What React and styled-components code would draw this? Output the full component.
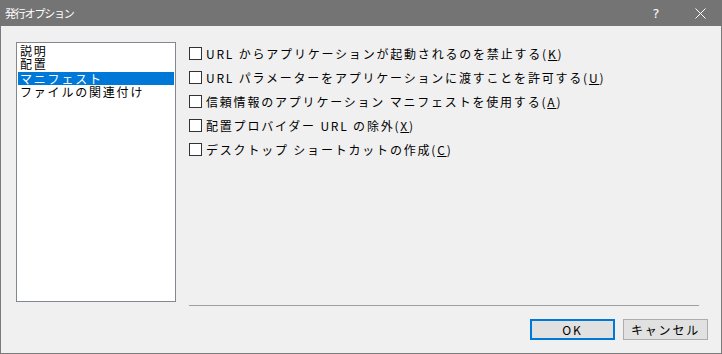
import React from 'react';
import styled, { createGlobalStyle } from 'styled-components';

const GlobalStyle = createGlobalStyle`
  html, body {
    margin: 0;
    padding: 0;
    background: #f0f0f0;
  }
  body {
    font-family: "Noto Sans CJK JP", "DejaVu Sans", sans-serif;
    -webkit-font-smoothing: none;
  }
`;

const Window = styled.div`
  width: 722px;
  height: 354px;
  box-sizing: border-box;
  display: flex;
  flex-direction: column;
  background: #f0f0f0;
  border: 1px solid #7a7a7a;
  border-top: none;
`;

const TitleBar = styled.div`
  height: 26px;
  margin: 0 -1px;
  background: #747474;
  color: #ffffff;
  display: flex;
  align-items: center;
  padding-left: 5px;
  font-size: 11px;
  letter-spacing: -1.2px;
`;

const TitleText = styled.span`
  flex: 1;
`;

const TitleButton = styled.span`
  width: 44px;
  height: 26px;
  display: flex;
  align-items: center;
  justify-content: center;
  font-family: "DejaVu Sans", sans-serif;
  font-size: 13px;
  letter-spacing: 0;
`;

const Body = styled.div`
  flex: 1;
  display: flex;
  flex-direction: column;
  padding: 16px 13px 13px 15px;
`;

const TopRow = styled.div`
  display: flex;
  align-items: flex-start;
`;

const ListBox = styled.ul`
  list-style: none;
  margin: 0;
  padding: 1px 1px;
  width: 160px;
  height: 260px;
  box-sizing: border-box;
  background: #ffffff;
  border: 1px solid #828790;
`;

const ListItem = styled.li`
  height: 13px;
  line-height: 13px;
  padding-left: 2px;
  font-size: 12px;
  letter-spacing: 1.8px;
  white-space: nowrap;
  color: ${({ selected }) => (selected ? '#ffffff' : '#000000')};
  background: ${({ selected }) => (selected ? '#0078d7' : 'transparent')};
  margin-top: ${({ selected }) => (selected ? '2px' : '0')};
`;

const OptionsPane = styled.div`
  flex: 1;
  height: 264px;
  margin-left: 13px;
  padding-right: 9px;
  display: flex;
  flex-direction: column;
`;

const OptionRow = styled.label`
  height: 24px;
  padding-bottom: 2px;
  box-sizing: border-box;
  display: flex;
  align-items: center;
  font-size: 12px;
  letter-spacing: 1.8px;
  color: #000000;
  white-space: nowrap;
`;

const CheckBox = styled.span`
  width: 13px;
  height: 13px;
  box-sizing: border-box;
  border: 1px solid #333333;
  background: #ffffff;
  margin-right: 4px;
  flex-shrink: 0;
`;

const Mnemonic = styled.span`
  text-decoration: underline;
`;

const Spacer = styled.div`
  flex: 1;
`;

const Separator = styled.div`
  height: 1px;
  background: #a0a0a0;
`;

const ButtonRow = styled.div`
  margin-top: 13px;
  display: flex;
  justify-content: flex-end;
  gap: 8px;
`;

const Button = styled.button`
  width: 85px;
  height: 21px;
  box-sizing: border-box;
  background: #e1e1e1;
  border: ${({ primary }) => (primary ? '2px solid #0078d7' : '1px solid #adadad')};
  font-family: "Noto Sans CJK JP", "DejaVu Sans", sans-serif;
  font-size: 12px;
  letter-spacing: 1.8px;
  color: #000000;
  padding: 0;
  display: flex;
  align-items: center;
  justify-content: center;
`;

const options = [
  { text: 'URL からアプリケーションが起動されるのを禁止する', key: 'K' },
  { text: 'URL パラメーターをアプリケーションに渡すことを許可する', key: 'U' },
  { text: '信頼情報のアプリケーション マニフェストを使用する', key: 'A' },
  { text: '配置プロバイダー URL の除外', key: 'X' },
  { text: 'デスクトップ ショートカットの作成', key: 'C' },
];

const pages = ['説明', '配置', 'マニフェスト', 'ファイルの関連付け'];

const CloseIcon = () => (
  <svg width="11" height="11" viewBox="0 0 11 11">
    <path d="M0.5 0.5 L10.5 10.5 M10.5 0.5 L0.5 10.5" stroke="#ffffff" strokeWidth="1" fill="none" />
  </svg>
);

const App = () => (
  <>
    <GlobalStyle />
    <Window>
      <TitleBar>
        <TitleText>発行オプション</TitleText>
        <TitleButton>?</TitleButton>
        <TitleButton>
          <CloseIcon />
        </TitleButton>
      </TitleBar>
      <Body>
        <TopRow>
          <ListBox>
            {pages.map((p, i) => (
              <ListItem key={p} selected={i === 2}>
                {p}
              </ListItem>
            ))}
          </ListBox>
          <OptionsPane>
            {options.map((o) => (
              <OptionRow key={o.key}>
                <CheckBox />
                {o.text}(<Mnemonic>{o.key}</Mnemonic>)
              </OptionRow>
            ))}
            <Spacer />
            <Separator />
          </OptionsPane>
        </TopRow>
        <ButtonRow>
          <Button primary>OK</Button>
          <Button>キャンセル</Button>
        </ButtonRow>
      </Body>
    </Window>
  </>
);

export default App;
